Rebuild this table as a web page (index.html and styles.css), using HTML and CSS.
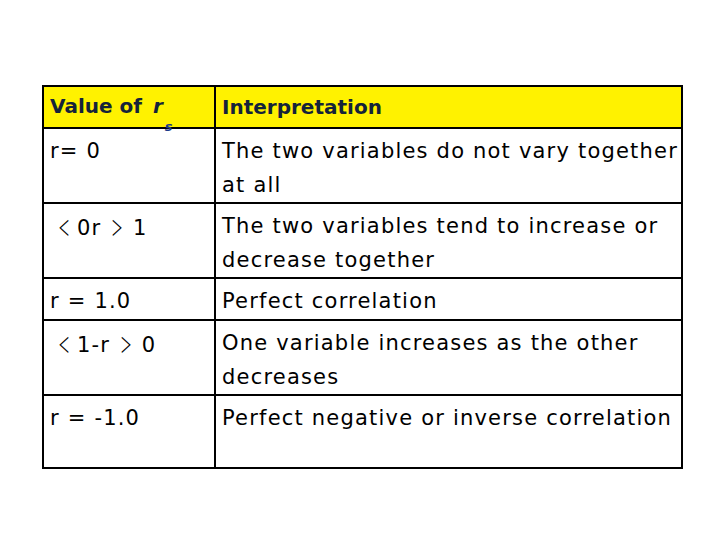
FILE: index.html
```html
<!DOCTYPE html>
<html>
<head>
<meta charset="utf-8">
<link rel="stylesheet" href="styles.css">
</head>
<body>
<div class="page">
<table class="corr">
  <tr class="head">
    <th class="c1">Value of <span class="r">r</span><span class="s">s</span></th>
    <th class="c2">Interpretation</th>
  </tr>
  <tr class="two">
    <td>r= 0</td>
    <td>The two variables do not vary together at all</td>
  </tr>
  <tr class="two">
    <td class="range"><span class="fw lt">＜</span> 0r <span class="fw">＞</span> 1</td>
    <td>The two variables tend to increase or decrease together</td>
  </tr>
  <tr class="one">
    <td>r = 1.0</td>
    <td>Perfect correlation</td>
  </tr>
  <tr class="two">
    <td class="range"><span class="fw lt">＜</span> 1-r <span class="fw">＞</span> 0</td>
    <td>One variable increases as the other decreases</td>
  </tr>
  <tr class="two last">
    <td>r = -1.0</td>
    <td>Perfect negative or inverse correlation</td>
  </tr>
</table>
</div>
</body>
</html>
```

FILE: styles.css
```css
html, body {
  margin: 0;
  padding: 0;
  background: #ffffff;
}
.page {
  width: 720px;
  height: 540px;
  padding: 85px 0 0 42px;
  box-sizing: border-box;
}
.corr {
  border-collapse: collapse;
  font-family: "DejaVu Sans", "Noto Sans CJK JP", sans-serif;
  font-size: 21px;
  letter-spacing: 1.2px;
  color: #000;
  width: 641px;
  table-layout: fixed;
}
.corr th, .corr td {
  border: 2px solid #000;
  padding: 0 0 0 6px;
  text-align: left;
  vertical-align: top;
  line-height: 34px;
  font-weight: normal;
}
.corr .c1 { width: 164px; }
.head th {
  background: #fff200;
  color: #14233a;
  font-weight: bold;
  font-size: 20px;
  letter-spacing: 0;
  height: 40px;
  vertical-align: middle;
}
.head .r {
  font-style: italic;
  margin-left: 4px;
}
.head .s {
  position: relative;
  top: 18px;
  left: 2px;
  font-size: 13px;
  font-style: italic;
  color: #1a3a8a;
}
.range {
  word-spacing: -3px;
}
.fw {
  display: inline-block;
  width: 22px;
  text-align: center;
  letter-spacing: 0;
  font-family: "Noto Sans CJK JP", sans-serif;
  transform: scaleX(0.55);
}
.fw.lt {
  transform: translateX(3px) scaleX(0.55);
}
.two td { height: 68px; padding-top: 5px; }
.one td { height: 35px; padding-top: 5px; }
.last td { height: 66px; }
```
